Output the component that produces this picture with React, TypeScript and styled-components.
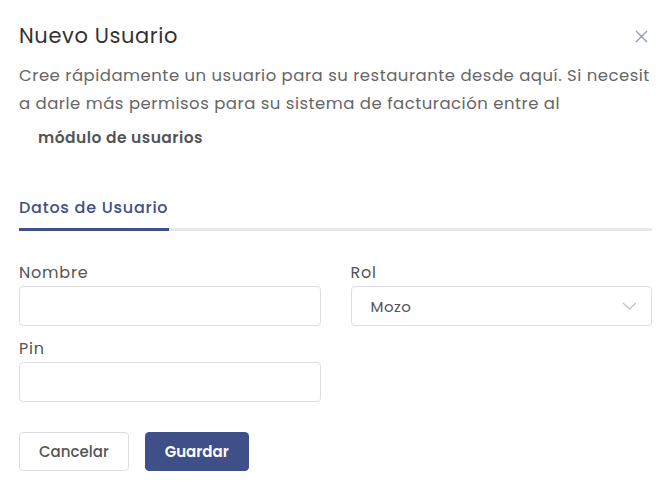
import React from "react";
import styled, {createGlobalStyle} from "styled-components";

const GlobalStyle = createGlobalStyle`
  html, body {
    margin: 0;
    padding: 0;
    background: #FFFFFF;
  }
  body {
    font-family: Poppins, Inter, "Noto Sans", sans-serif;
  }
  * {
    box-sizing: border-box;
  }
`;

const PRIMARY = "#3f4f88";

export default function App() {
  return (
    <>
      <GlobalStyle/>
      <Modal>
        <Header>
          <Title>Nuevo Usuario</Title>
          <CloseButton aria-label="Cerrar">
            <svg width="13" height="13" viewBox="0 0 13 13">
              <path d="M1 1L12 12M12 1L1 12" stroke="#8a97bb" strokeWidth="1.2" fill="none"/>
            </svg>
          </CloseButton>
        </Header>

        <Description>
          Cree rápidamente un usuario para su restaurante desde aquí. Si necesit<br/>
          a darle más permisos para su sistema de facturación entre al
        </Description>
        <ModuleLink>módulo de usuarios</ModuleLink>

        <Tabs>
          <Tab $active>Datos de Usuario</Tab>
        </Tabs>

        <FormGrid>
          <FieldBlock>
            <Label>Nombre</Label>
            <Input/>
          </FieldBlock>
          <FieldBlock>
            <Label>Rol</Label>
            <Select>
              <span>Mozo</span>
              <svg width="15" height="8" viewBox="0 0 15 8">
                <path d="M1 1L7.5 7L14 1" stroke="#bdbdbd" strokeWidth="1.1" fill="none"/>
              </svg>
            </Select>
          </FieldBlock>
          <FieldBlock>
            <Label>Pin</Label>
            <Input/>
          </FieldBlock>
        </FormGrid>

        <Buttons>
          <Button>Cancelar</Button>
          <Button $primary>Guardar</Button>
        </Buttons>
      </Modal>
    </>
  );
}

const Modal = styled.div`
  width: 665px;
  padding: 20px 13px 0 19px;
  display: flex;
  flex-direction: column;
`;

const Header = styled.div`
  display: flex;
  align-items: center;
  justify-content: space-between;
  height: 32px;
`;

const Title = styled.h2`
  margin: 0;
  font-size: 21px;
  font-weight: 400;
  letter-spacing: 0.6px;
  color: #333333;
  line-height: 32px;
`;

const CloseButton = styled.button`
  border: none;
  background: none;
  padding: 0;
  margin-right: 4px;
  width: 13px;
  height: 13px;
  display: flex;
  cursor: pointer;
`;

const Description = styled.p`
  margin: 10px 0 0;
  font-size: 16.5px;
  letter-spacing: 0.5px;
  line-height: 28px;
  color: #666666;
`;

const ModuleLink = styled.div`
  margin-top: 6px;
  padding-left: 19px;
  font-size: 15.5px;
  font-weight: 600;
  letter-spacing: 0.45px;
  line-height: 28px;
  color: #555555;
`;

const Tabs = styled.div`
  margin-top: 44px;
  display: flex;
  border-bottom: 3px solid #e5e7ec;
`;

const Tab = styled.div<{$active?: boolean}>`
  width: 150px;
  padding-bottom: 8px;
  margin-bottom: -3px;
  font-size: 16px;
  font-weight: 500;
  letter-spacing: 0.75px;
  line-height: 24px;
  color: ${p => p.$active ? PRIMARY : "#666666"};
  border-bottom: 3px solid ${p => p.$active ? PRIMARY : "transparent"};
`;

const FormGrid = styled.div`
  margin-top: 31px;
  display: grid;
  grid-template-columns: 1fr 1fr;
  column-gap: 30px;
  row-gap: 12px;
`;

const FieldBlock = styled.div`
  display: flex;
  flex-direction: column;
`;

const Label = styled.label`
  font-size: 16px;
  letter-spacing: 0.8px;
  line-height: 22px;
  margin-bottom: 2px;
  color: #555555;
`;

const Input = styled.input`
  height: 40px;
  width: 100%;
  border: 1px solid #dddde3;
  border-radius: 4px;
  padding: 0 12px;
  font-family: inherit;
  font-size: 15px;
  outline: none;
`;

const Select = styled.div`
  height: 40px;
  border: 1px solid #dddde3;
  border-radius: 4px;
  padding: 0 14px 0 19px;
  display: flex;
  align-items: center;
  justify-content: space-between;
  font-size: 15px;
  letter-spacing: 0.5px;
  color: #555555;
`;

const Buttons = styled.div`
  margin-top: 30px;
  display: flex;
  gap: 16px;
`;

const Button = styled.button<{$primary?: boolean}>`
  height: 39px;
  padding: 0 19px;
  border-radius: 4px;
  font-family: inherit;
  font-size: 15px;
  font-weight: ${p => p.$primary ? 600 : 500};
  color: ${p => p.$primary ? "#FFFFFF" : "#555555"};
  background: ${p => p.$primary ? PRIMARY : "#FFFFFF"};
  border: 1px solid ${p => p.$primary ? PRIMARY : "#dddde3"};
  cursor: pointer;
`;
